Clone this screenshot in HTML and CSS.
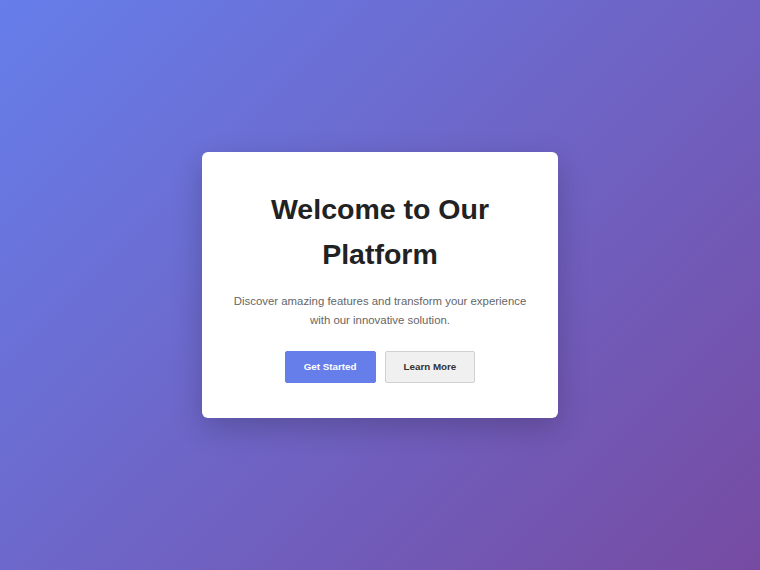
FILE: index.html
```html
<!DOCTYPE html>
<html lang="en">
<head>
    <meta charset="UTF-8">
    <meta name="viewport" content="width=device-width, initial-scale=1.0">
    <title>Welcome</title>
    <link rel="stylesheet" href="styles.css">
</head>
<body>
    <div class="card">
        <h1>Welcome to Our Platform</h1>
        <p>Discover amazing features and transform your experience with our innovative solution.</p>
        <div class="actions">
            <button class="btn btn-primary">Get Started</button>
            <button class="btn btn-secondary">Learn More</button>
        </div>
    </div>
</body>
</html>
```

FILE: styles.css
```css
html, body {
    height: 100%;
}
body {
    margin: 0;
    font-family: "Liberation Sans", Arial, sans-serif;
    background: linear-gradient(135deg, #667eea 0%, #764ba2 100%);
    display: flex;
    justify-content: center;
    align-items: center;
}
.card {
    width: 296px;
    background: #fff;
    padding: 35px 30px 35px;
    border-radius: 6px;
    box-shadow: 0 10px 30px rgba(0, 0, 0, 0.2);
    text-align: center;
}
.card h1 {
    margin: 0;
    font-size: 28.5px;
    line-height: 45px;
    color: #222;
}
.card p {
    margin: 15px 0 21px;
    font-size: 11.4px;
    line-height: 19px;
    color: #666;
}
.actions {
    display: flex;
    justify-content: center;
    gap: 9px;
}
.btn {
    font-family: "Liberation Sans", Arial, sans-serif;
    font-size: 9.8px;
    font-weight: bold;
    line-height: 12px;
    padding: 9px 18px;
    border: 1px solid transparent;
    border-radius: 2px;
    cursor: pointer;
}
.btn-primary {
    background: #667eea;
    color: #fff;
    border-color: #667eea;
}
.btn-secondary {
    background: #f0f0f0;
    color: #333;
    border-color: #d0d0d0;
}
```
